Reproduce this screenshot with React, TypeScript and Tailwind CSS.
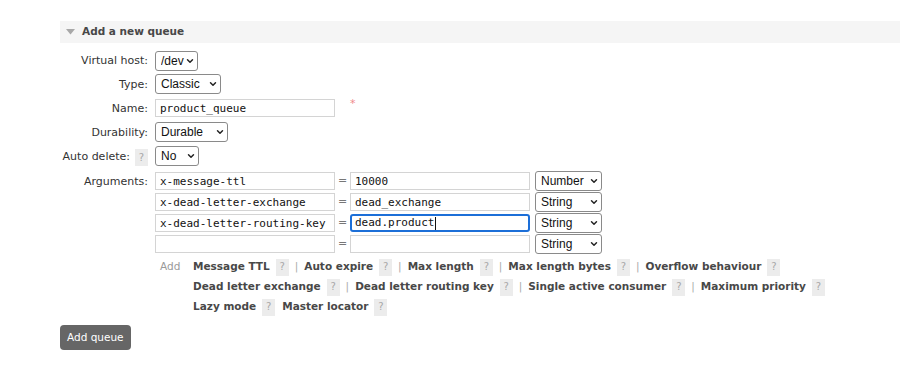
import React from 'react';
import { ChevronDown } from 'lucide-react';

const sans = "font-['DejaVu_Sans',Verdana,sans-serif]";
const mono = "font-['DejaVu_Sans_Mono','Liberation_Mono',monospace]";

function Help() {
  return (
    <span className={`inline-flex h-[17px] w-[13px] items-center justify-center bg-[#ececec] text-[10px] font-normal text-[#a8a8a8] ${sans}`}>
      ?
    </span>
  );
}

function Select({ value, width }: { value: string; width: string }) {
  return (
    <div className={`relative h-[20px] shrink-0 ${width}`}>
      <select
        defaultValue={value}
        className="block h-full w-full appearance-none rounded-[3px] border border-[#8a8a8a] bg-white py-0 pl-[5px] pr-[8px] font-['Liberation_Sans',Arial,sans-serif] text-[12px] leading-[18px] text-[#111] outline-none"
      >
        <option>{value}</option>
      </select>
      <ChevronDown className="pointer-events-none absolute right-[3px] top-[5px] h-[10px] w-[10px] text-[#222]" strokeWidth={3.5} />
    </div>
  );
}

function TextBox({ value, focused }: { value: string; focused?: boolean }) {
  if (focused) {
    return (
      <div className={`flex h-[18px] w-[180px] items-center rounded-[3px] border-2 border-[#1c6fd8] pl-[3px] text-[11px] text-[#111] ${mono}`}>
        {value}
        <span className="ml-[1px] h-[13px] w-px bg-[#111]" />
      </div>
    );
  }
  return (
    <input
      readOnly
      value={value}
      className={`block h-[18px] w-[180px] border border-[#d4d4d4] bg-white px-[4px] text-[11px] text-[#111] outline-none ${mono}`}
    />
  );
}

function FieldRow({ label, help, height = 'h-[24px]', children }: { label: string; help?: boolean; height?: string; children: React.ReactNode }) {
  return (
    <div className={`flex items-center ${height}`}>
      <div className="flex w-[148px] shrink-0 items-center justify-end gap-[5px] whitespace-nowrap pt-[2px] text-[11px] text-[#333]">
        <span>{label}</span>
        {help && <Help />}
      </div>
      <div className="ml-[7px] flex items-center">{children}</div>
    </div>
  );
}

const argRows = [
  { key: 'x-message-ttl', value: '10000', type: 'Number' },
  { key: 'x-dead-letter-exchange', value: 'dead_exchange', type: 'String' },
  { key: 'x-dead-letter-routing-key', value: 'dead.product', type: 'String', focused: true },
  { key: '', value: '', type: 'String' },
];

const linkLines: { label: string; sep: boolean }[][] = [
  [
    { label: 'Message TTL', sep: true },
    { label: 'Auto expire', sep: true },
    { label: 'Max length', sep: true },
    { label: 'Max length bytes', sep: true },
    { label: 'Overflow behaviour', sep: false },
  ],
  [
    { label: 'Dead letter exchange', sep: true },
    { label: 'Dead letter routing key', sep: true },
    { label: 'Single active consumer', sep: true },
    { label: 'Maximum priority', sep: false },
  ],
  [
    { label: 'Lazy mode', sep: false },
    { label: 'Master locator', sep: false },
  ],
];

export default function App() {
  return (
    <div className={`h-[380px] w-[916px] bg-white pt-[21px] ${sans}`}>
      <div className="ml-[60px] mr-[16px] flex h-[22px] items-center bg-[#f5f5f5] pl-[6px]">
        <svg width="9" height="6" viewBox="0 0 9 6" className="mr-[7px]">
          <path d="M0 0 L9 0 L4.5 5.5 Z" fill="#a8a8a8" />
        </svg>
        <span className="text-[10.5px] font-bold text-[#484848]">Add a new queue</span>
      </div>

      <div className="mt-[6px]">
        <FieldRow label="Virtual host:" height="h-[23px]">
          <Select value="/dev" width="w-[43px]" />
        </FieldRow>
        <FieldRow label="Type:">
          <Select value="Classic" width="w-[66px]" />
        </FieldRow>
        <FieldRow label="Name:">
          <TextBox value="product_queue" />
          <span className="ml-[15px] -mt-[8px] text-[11px] text-[#f08a8a]">*</span>
        </FieldRow>
        <FieldRow label="Durability:">
          <Select value="Durable" width="w-[73px]" />
        </FieldRow>
        <FieldRow label="Auto delete:" help>
          <Select value="No" width="w-[44px]" />
        </FieldRow>

        <div className="mt-[4px] flex">
          <div className="w-[148px] shrink-0 pt-[2px] text-right text-[11px] text-[#333]">Arguments:</div>
          <div className="ml-[7px] flex flex-col gap-[3px]">
            {argRows.map((row, i) => (
              <div key={i} className="flex h-[18px] items-center">
                <TextBox value={row.key} />
                <span className="w-[15px] text-center text-[11px] text-[#777]">=</span>
                <TextBox value={row.value} focused={row.focused} />
                <div className="ml-[5px] flex items-center">
                  <Select value={row.type} width="w-[67px]" />
                </div>
              </div>
            ))}

            <div className="flex text-[10.5px] leading-[20px]">
              <span className="ml-[5px] w-[33px] shrink-0 text-[#9a9a9a]">Add</span>
              <div className="flex flex-col">
                {linkLines.map((line, li) => (
                  <div key={li} className="flex items-center whitespace-nowrap">
                    {line.map((link, j) => (
                      <span key={j} className="flex items-center">
                        <span className="font-bold text-[#484848]">{link.label}</span>
                        <span className="ml-[6px]"><Help /></span>
                        {link.sep ? (
                          <span className="mx-[6px] text-[#aaa]">|</span>
                        ) : (
                          <span className="w-[7px]" />
                        )}
                      </span>
                    ))}
                  </div>
                ))}
              </div>
            </div>
          </div>
        </div>
      </div>

      <button className="ml-[60px] mt-[9px] h-[25px] rounded-[4px] bg-[#666] px-[7px] text-[10.5px] text-white">
        Add queue
      </button>
    </div>
  );
}
